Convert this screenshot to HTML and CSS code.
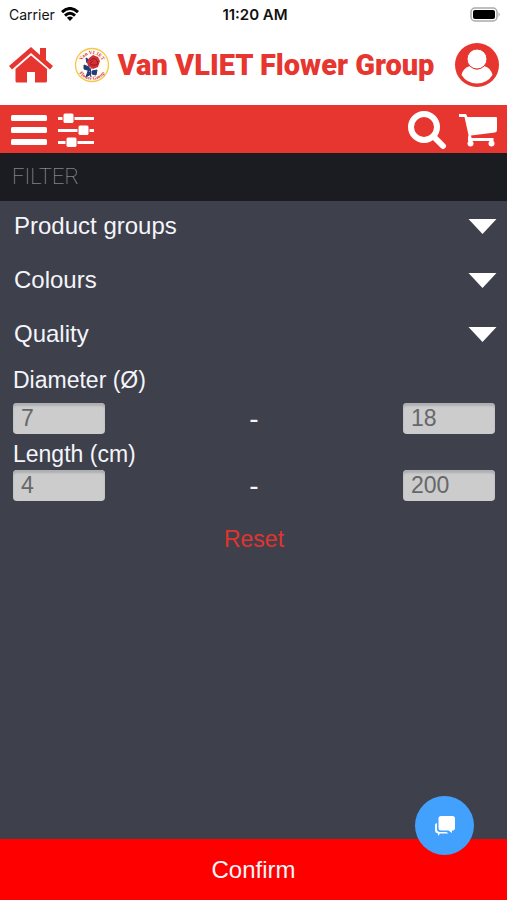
FILE: index.html
```html
<!DOCTYPE html>
<html lang="en">
<head>
<meta charset="utf-8">
<meta name="viewport" content="width=device-width, initial-scale=1">
<title>Filter</title>
<link rel="stylesheet" href="styles.css">
</head>
<body>
<div class="status">
  <div class="carrier">Carrier
    <svg width="18" height="14" viewBox="0 0 18 14" fill="none" stroke="#000" stroke-width="3"><path d="M1 5.200Q9-2.200 17 5.200"/><path d="M4 8.600Q9 4 14 8.600"/><path d="M9 14 5.900 10.800Q9 8.300 12.100 10.800Z" fill="#000" stroke="none"/></svg>
  </div>
  <time class="clock">11:20 AM</time>
  <div class="battery">
    <svg width="31" height="15" viewBox="0 0 31 15"><rect x="1" y="1" width="26" height="13" rx="4" fill="#fff" stroke="#aaa" stroke-width="1.500"/><rect x="3" y="3" width="22" height="9" rx="2"/><path d="M28.500 5Q31 7.500 28.500 10Z" fill="#aaa"/></svg>
  </div>
</div>
<header class="header">
  <a class="icon-link" href="#" aria-label="Home">
    <svg width="44" height="36" viewBox="0 0 44 36" fill="#e7352f"><path d="M22 0 31 8V1H37V13L44 19 41 22.500 22 6 3 22.500 0 19Z"/><path d="M22 8.500 38 22V34Q38 35.500 36.500 35.500H26V25H18V35.500H8Q6.500 35.500 6.500 34V22Z"/></svg>
  </a>
  <a class="brand" href="#">
    <svg width="36" height="36" viewBox="0 0 36 36" aria-hidden="true">
      <defs><path id="arc-top" d="M7 18A11 11 0 0 1 29 18"/><path id="arc-bottom" d="M3 18A15 15 0 0 0 33 18"/></defs>
      <circle cx="18" cy="18" r="16.500" fill="#fffdf5" stroke="#f4c84a" stroke-width="1.300"/>
      <path d="M17 21Q15 25 17 30M10 18 15 20 16 24 10 22ZM14 24 17 27 12 30ZM18 24 23 23 22 28 18 27ZM12 11 17 14 13 16Z" fill="#213d78" stroke="#213d78"/>
      <path d="M15 11 19 8 24 10 26 14 24 20 19 22 14 19 13 15Z" fill="#d42f35"/>
      <path d="M16 14Q20 9 23 14T18 18Q14 17 19 14" fill="none" stroke="#8e1b2c"/>
      <g class="seal-text"><text><textPath href="#arc-top" startOffset="50%">Van VLIET</textPath></text><text><textPath href="#arc-bottom" startOffset="50%">Flower Group</textPath></text></g>
    </svg>
    <span class="brand-name">Van VLIET Flower Group</span>
  </a>
  <a class="icon-link" href="#" aria-label="Account">
    <svg width="44" height="44" viewBox="0 0 44 44"><circle cx="22" cy="22" r="22" fill="#e7352f"/><path d="M6.500 32Q8 25 15 23Q22 30 29 23Q36 25 37.500 32Q32 40.500 22 40.500T6.500 32Z" fill="#fff"/><circle cx="22" cy="16" r="10" fill="#fff" stroke="#e7352f"/></svg>
  </a>
</header>
<nav class="toolbar" aria-label="Tools">
  <button class="tool" type="button" aria-label="Menu">
    <svg width="36" height="32" viewBox="0 0 36 32" fill="#fff"><rect y="1" width="36" height="6" rx="1.500"/><rect y="13" width="36" height="6" rx="1.500"/><rect y="25" width="36" height="6" rx="1.500"/></svg>
  </button>
  <button class="tool" type="button" aria-label="Filter">
    <svg width="36" height="35" viewBox="0 0 36 35" fill="#fff"><path d="M0 4H36V7H0ZM0 16H36V19H0ZM0 28H36V31H0Z"/><g stroke="#e7352f"><rect x="5" y="0" width="11" height="10.500" rx="2"/><rect x="20" y="12" width="11" height="10.500" rx="2"/><rect x="8" y="24" width="11" height="10.500" rx="2"/></g></svg>
  </button>
  <span class="spacer"></span>
  <button class="tool" type="button" aria-label="Search">
    <svg width="40" height="40" viewBox="0 0 40 40" fill="none" stroke="#fff"><circle cx="17" cy="17" r="13" stroke-width="6"/><path d="M27 27 36 36" stroke-width="6" stroke-linecap="round"/></svg>
  </button>
  <button class="tool" type="button" aria-label="Cart">
    <svg width="40" height="34" viewBox="0 0 40 34" fill="#fff"><path d="M1 1H8L9.500 4H38Q39 4 39 5V17Q39 19 37 19.500L13 22.500 13.500 25H35.500V28H10V24.500L10.500 22 6.500 4H1Z"/><circle cx="12.500" cy="30.500" r="3"/><circle cx="33.500" cy="30.500" r="3"/></svg>
  </button>
</nav>
<main class="panel">
  <h1 class="title">FILTER</h1>
  <div class="groups">
    <button class="group" type="button">Product groups<svg class="arrow" viewBox="0 0 28 15"><path d="M0 0H28L14 15Z"/></svg></button>
    <button class="group" type="button">Colours<svg class="arrow" viewBox="0 0 28 15"><path d="M0 0H28L14 15Z"/></svg></button>
    <button class="group" type="button">Quality<svg class="arrow" viewBox="0 0 28 15"><path d="M0 0H28L14 15Z"/></svg></button>
  </div>
  <form class="ranges">
    <div class="field">
      <label class="range-label" for="diameter-min">Diameter (Ø)</label>
      <div class="range"><input id="diameter-min" value="7" inputmode="numeric"><span class="dash">-</span><input value="18" inputmode="numeric" aria-label="Maximum diameter"></div>
    </div>
    <div class="field">
      <label class="range-label" for="length-min">Length (cm)</label>
      <div class="range"><input id="length-min" value="4" inputmode="numeric"><span class="dash">-</span><input value="200" inputmode="numeric" aria-label="Maximum length"></div>
    </div>
    <button class="reset" type="button">Reset</button>
  </form>
</main>
<footer class="footer">
  <button class="confirm" type="button">Confirm</button>
  <button class="chat" type="button" aria-label="Chat">
    <svg width="22" height="22" viewBox="0 0 22 22" fill="#fff"><path d="M7 1H18.500Q21 1 21 3.500V13Q21 15.500 18.500 15.500H18V18L14.500 15.500H7Q4.500 15.500 4.500 13V3.500Q4.500 1 7 1Z"/><path d="M3 8V14Q3 17 6 17H12.500L14.500 18.500H6L4 21V18.500Q1 18 1 15V10Q1 8.500 3 8Z"/></svg>
  </button>
</footer>
</body>
</html>
```
FILE: styles.css
```css
* { box-sizing: border-box; }
body {
  margin: 0;
  min-height: 100vh;
  display: flex;
  flex-direction: column;
  background: #fff;
  color: #f4f5fa;
  font-family: "Liberation Sans", Arial, sans-serif;
}
svg { display: block; }
button {
  border: 0;
  padding: 0;
  background: none;
  color: inherit;
  font: inherit;
}
.status {
  display: grid;
  grid-template-columns: 1fr auto 1fr;
  align-items: center;
  height: 28px;
  padding: 0 6px 0 9px;
  color: #111;
  font: 14px Inter, sans-serif;
}
.carrier { display: flex; align-items: center; gap: 6px; }
.clock { font-size: 15px; font-weight: 600; }
.battery { justify-self: end; }
.header {
  display: flex;
  align-items: center;
  justify-content: space-between;
  height: 77px;
  padding: 0 8px 4px 9px;
}
.brand {
  display: flex;
  align-items: center;
  gap: 8px;
  color: #e7352f;
  text-decoration: none;
}
.brand-name {
  font: 900 29px Roboto, sans-serif;
  white-space: nowrap;
}
.seal-text {
  fill: #d42f35;
  font: bold 5px "Liberation Serif", serif;
  text-anchor: middle;
}
.toolbar {
  display: flex;
  align-items: center;
  gap: 11px;
  height: 48px;
  padding: 2px 9px 0 11px;
  background: #e7352f;
}
.spacer { flex: 1; }
.panel {
  flex: 1;
  background: #3e404c;
}
.title {
  margin: 0;
  padding: 0 12px;
  background: #1b1c21;
  color: #aaa;
  font: 100 22px/48px Roboto, sans-serif;
}
.group {
  display: flex;
  align-items: center;
  justify-content: space-between;
  width: 100%;
  height: 54px;
  padding: 0 10px 4px 14px;
  font-size: 24px;
}
.arrow {
  width: 29px;
  height: 15px;
  fill: #fff;
}
.ranges {
  display: flex;
  flex-direction: column;
  gap: 4px;
  padding: 0 12px 0 13px;
  font-size: 23px;
}
.field {
  display: flex;
  flex-direction: column;
}
.field:first-child { gap: 6px; }
.range-label { line-height: 32px; }
.field:first-child .range-label { line-height: 34px; }
.range {
  display: flex;
  align-items: center;
  justify-content: space-between;
  height: 31px;
}
.dash {
  font-size: 28px;
  line-height: 31px;
}
.range input {
  width: 92px;
  height: 31px;
  padding: 0 8px;
  border: 0;
  border-radius: 4px;
  background: #cbcccb;
  box-shadow: inset 0 3px 2px #aeafb3;
  color: #66676a;
  font: inherit;
}
.reset {
  align-self: center;
  margin-top: 20px;
  color: #e0352f;
  line-height: 28px;
}
.footer {
  position: relative;
  background: #f00;
}
.confirm {
  width: 100%;
  height: 61px;
  font-size: 24px;
}
.chat {
  position: absolute;
  right: 33px;
  bottom: 45px;
  display: grid;
  place-items: center;
  width: 59px;
  height: 59px;
  border-radius: 50%;
  background: #42a1fc;
}
```
